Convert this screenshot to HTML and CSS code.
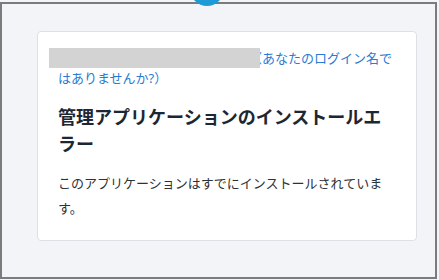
FILE: index.html
```html
<!DOCTYPE html>
<html lang="ja">
<head>
  <meta charset="UTF-8" />
  <title>管理アプリケーションのインストールエラー</title>
  <meta name="viewport" content="width=device-width, initial-scale=1.0" />
  <link rel="stylesheet" href="styles.css">
</head>
<body>

  <div class="frame">
    <span class="logo"></span>

    <div class="card">
      <p class="account">
        <span class="redacted"></span><a href="#">（あなたのログイン名ではありませんか?）</a>
      </p>
      <h1>管理アプリケーションのインストールエラー</h1>
      <p class="message">このアプリケーションはすでにインストールされています。</p>
    </div>
  </div>

</body>
</html>
```

FILE: styles.css
```css
* {
  box-sizing: border-box;
}

body {
  margin: 0;
  padding: 2px 0 0 0;
  background: #f3f4f8;
  font-family: 'Noto Sans', 'Noto Sans CJK JP', sans-serif;
}

.frame {
  position: relative;
  width: 437px;
  height: 277px;
  border: 2px solid #7b7b7b;
  background: #f3f4f8;
  padding: 27px 0 0 35px;
}

/* blue badge peeking over the top edge */
.logo {
  position: absolute;
  left: 188px;
  top: -32px;
  width: 34px;
  height: 34px;
  border-radius: 50%;
  background: #1e9ad6;
  z-index: 1;
}

.card {
  width: 380px;
  height: 210px;
  background: #fff;
  border: 1px solid #dde1e7;
  border-radius: 4px;
  padding: 16px 18px 0 20px;
}

.account {
  margin: 0;
  font-size: 13px;
  line-height: 20px;
}

.account a {
  color: #2a7bd3;
  text-decoration: none;
}

/* grey box hiding the account name, overlapping the bracket a little */
.redacted {
  position: relative;
  z-index: 1;
  display: inline-block;
  width: 211px;
  height: 20px;
  margin-left: -9px;
  margin-right: -11px;
  background: #d3d3d3;
  vertical-align: top;
}

h1 {
  margin: 16px 0 0 0;
  font-size: 18px;
  line-height: 27px;
  font-weight: 700;
  color: #1d2733;
}

.message {
  margin: 13px 0 0 0;
  font-size: 13px;
  line-height: 25px;
  color: #2c3338;
}
```
